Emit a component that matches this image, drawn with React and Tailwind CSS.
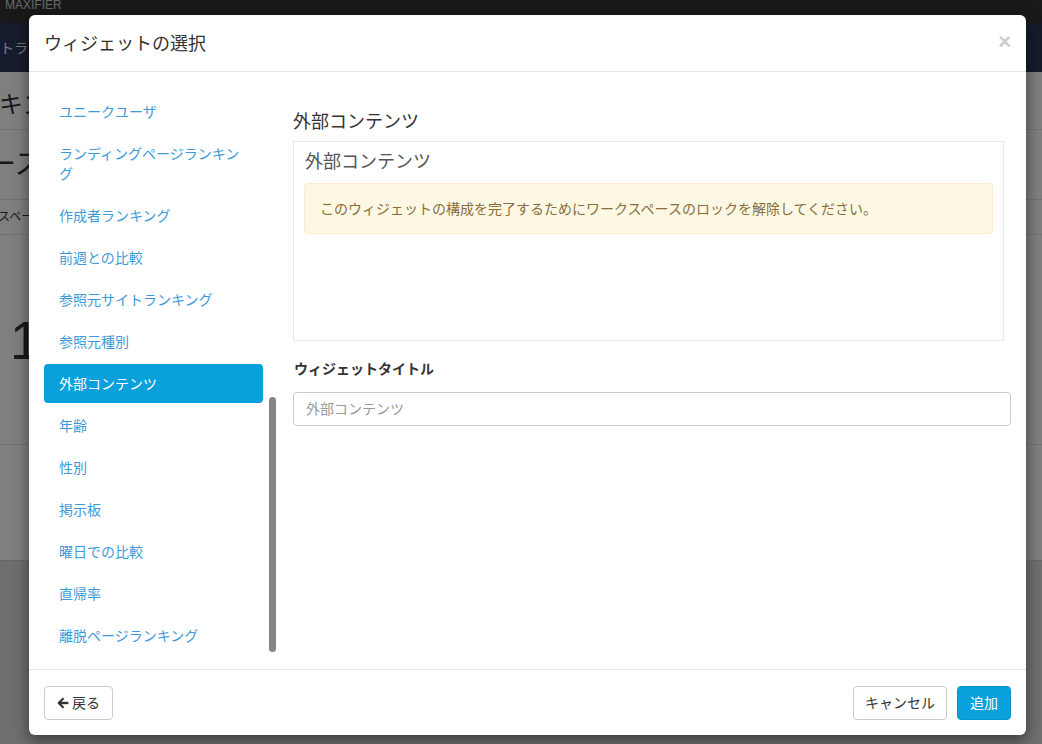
import React from 'react';
import { FaArrowLeft } from 'react-icons/fa';

const widgets = [
    'ユニークユーザ',
    'ランディングページランキング',
    '作成者ランキング',
    '前週との比較',
    '参照元サイトランキング',
    '参照元種別',
    '外部コンテンツ',
    '年齢',
    '性別',
    '掲示板',
    '曜日での比較',
    '直帰率',
    '離脱ページランキング',
];

const font = { fontFamily: '"Liberation Sans", "Noto Sans CJK JP", sans-serif' };

function BackgroundPage() {
    return (
        <div className="flex flex-col h-full">
            {/* App title bar */}
            <div className="h-[23px] bg-[#333333] text-[12px] leading-[10px] text-[#d0d0d0] px-[5px] shrink-0">MAXIFIER</div>

            {/* Nav bar */}
            <div className="h-[49px] bg-[#2a3856] flex items-center shrink-0">
                <span className="text-[14px] text-[#f2f4f8] pt-[2px]">トラフィック</span>
            </div>

            {/* Page content */}
            <div className="bg-white flex flex-col shrink-0">
                <div className="h-[58px] flex items-end border-b border-[#e2e2e2]">
                    <span className="text-[24px] leading-[40px] text-[#333] -ml-[1px] pb-[4px]">キング</span>
                </div>
                <div className="h-[70px] flex items-center border-b border-[#e2e2e2]">
                    <span className="text-[28px] leading-[40px] text-[#333] -ml-[12px]">ース</span>
                </div>
                <div className="h-[35px] flex items-center border-b border-[#e2e2e2]">
                    <span className="text-[12px] text-[#333] -ml-[2px]">スペース</span>
                </div>
                <div className="h-[210px] flex items-center border-b border-[#e2e2e2]">
                    <span className="text-[54px] font-light leading-[60px] text-[#333] ml-[10px]">1</span>
                </div>
                <div className="h-[115px]" />
            </div>
            <div className="flex-1 bg-[#dedede] border-t border-[#d0d0d0]" />
        </div>
    );
}

function WidgetList() {
    return (
        <div className="flex gap-[6px] w-[232px] shrink-0">
            <ul className="w-[219px] pt-[20px] flex flex-col gap-[3px]">
                {widgets.map((name) => {
                    const active = name === '外部コンテンツ';
                    return (
                        <li
                            key={name}
                            className={`px-[15px] py-[9.5px] text-[14px] leading-[20px] rounded-[4px] ${
                                active ? 'bg-[#09a0dc] text-white' : 'text-[#3d9ad8]'
                            }`}
                        >
                            {name}
                        </li>
                    );
                })}
            </ul>
            <div className="w-[7px] flex flex-col justify-end pb-[17px]">
                <div className="h-[255px] w-[7px] rounded-full bg-[#858585]" />
            </div>
        </div>
    );
}

function WidgetSettings() {
    return (
        <div className="flex-1 pt-[40px] flex flex-col">
            <h3 className="text-[18px] leading-[20px] text-[#333] mb-[9px]">外部コンテンツ</h3>

            <div className="h-[200px] mr-[7px] border border-[#e9e9e9] px-[10px] pt-[10px]">
                <div className="text-[18px] leading-[20px] text-[#555] pl-[1px] mb-[11px]">外部コンテンツ</div>
                <div className="border border-[#faebcc] bg-[#fcf8e3] rounded-[4px] px-[15px] py-[14.5px] text-[14px] leading-[20px] text-[#8a6d3b]">
                    このウィジェットの構成を完了するためにワークスペースのロックを解除してください。
                </div>
            </div>

            <label className="mt-[18px] mb-[13px] text-[14px] leading-[20px] font-bold text-[#333] pl-[1px]">ウィジェットタイトル</label>
            <input
                className="h-[34px] border border-[#cccccc] rounded-[4px] px-[12px] text-[14px] text-[#555] placeholder:text-[#9a9a9a] outline-none"
                placeholder="外部コンテンツ"
                style={font}
            />
        </div>
    );
}

export default function App() {
    return (
        <div className="relative w-[1042px] h-[744px] overflow-hidden" style={font}>
            <BackgroundPage />

            {/* Backdrop */}
            <div className="absolute inset-0 bg-black/50" />

            {/* Modal */}
            <div className="absolute left-[29px] top-[15px] w-[997px] h-[720px] bg-white rounded-[6px] shadow-[0_5px_15px_rgba(0,0,0,0.5)] flex flex-col">
                <div className="h-[57px] shrink-0 flex items-center justify-between px-[15px] border-b border-[#e5e5e5]">
                    <h4 className="text-[18px] text-[#333] pt-[2px]">ウィジェットの選択</h4>
                    <span className="text-[22px] font-bold leading-none text-[#cccccc] -mt-[3px]">×</span>
                </div>

                <div className="h-[597px] shrink-0 flex gap-[17px] px-[15px]">
                    <WidgetList />
                    <WidgetSettings />
                </div>

                <div className="flex-1 border-t border-[#e5e5e5] px-[15px] pt-[16px] flex justify-between items-start">
                    <button className="h-[34px] w-[69px] flex items-center justify-center gap-[3px] border border-[#cccccc] rounded-[4px] bg-white text-[14px] text-[#333]">
                        <FaArrowLeft className="w-[12px] h-[12px] stroke-[20px]" stroke="currentColor" />
                        戻る
                    </button>
                    <div className="flex gap-[10px]">
                        <button className="h-[34px] w-[94px] border border-[#cccccc] rounded-[4px] bg-white text-[14px] text-[#333]">
                            キャンセル
                        </button>
                        <button className="h-[34px] w-[54px] border border-[#0895cf] rounded-[4px] bg-[#09a0dc] text-[14px] text-white">
                            追加
                        </button>
                    </div>
                </div>
            </div>
        </div>
    );
}
